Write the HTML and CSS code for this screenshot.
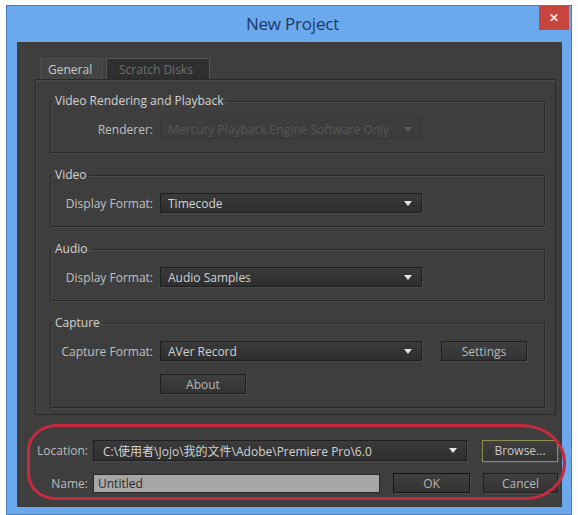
FILE: index.html
```html
<!DOCTYPE html>
<html>
<head>
  <meta charset="utf-8">
  <link rel="stylesheet" href="styles.css">
</head>
<body>
  <div class="window">
    <div class="titlebar">
      <span></span>
      <span class="title">New Project</span>
      <span class="close">&#x2715;</span>
    </div>

    <div class="content">
      <div class="tabs">
        <div class="tab active">General</div>
        <div class="tab">Scratch Disks</div>
      </div>

      <div class="panel">
        <fieldset class="group">
          <legend>Video Rendering and Playback</legend>
          <div class="row">
            <label>Renderer:</label>
            <div class="select disabled"><span>Mercury Playback Engine Software Only</span><i class="arrow"></i></div>
          </div>
        </fieldset>

        <fieldset class="group">
          <legend>Video</legend>
          <div class="row">
            <label>Display Format:</label>
            <div class="select"><span>Timecode</span><i class="arrow"></i></div>
          </div>
        </fieldset>

        <fieldset class="group">
          <legend>Audio</legend>
          <div class="row">
            <label>Display Format:</label>
            <div class="select"><span>Audio Samples</span><i class="arrow"></i></div>
          </div>
        </fieldset>

        <fieldset class="group">
          <legend>Capture</legend>
          <div class="row">
            <label>Capture Format:</label>
            <div class="select"><span>AVer Record</span><i class="arrow"></i></div>
            <button class="btn settings">Settings</button>
          </div>
          <div class="row sub">
            <span></span>
            <button class="btn about">About</button>
          </div>
        </fieldset>
      </div>

      <div class="footer">
        <div class="frow">
          <label>Location:</label>
          <div class="select location"><span>C:\使用者\Jojo\我的文件\Adobe\Premiere Pro\6.0</span><i class="arrow"></i></div>
          <button class="btn browse">Browse...</button>
        </div>
        <div class="frow">
          <label>Name:</label>
          <div class="name-input">Untitled</div>
          <button class="btn ok">OK</button>
          <button class="btn cancel">Cancel</button>
        </div>
        <div class="mark"></div>
      </div>
    </div>
  </div>
</body>
</html>
```

FILE: styles.css
```css
body {
  margin: 0;
  background: #fdfdfd;
  font-family: 'Open Sans', 'Noto Sans', 'Noto Sans CJK TC', sans-serif;
  font-size: 12px;
}

.window {
  box-sizing: border-box;
  width: 566px;
  height: 510px;
  margin: 5px 0 0 6px;
  background: #6ba8ec;
  border: 1px solid #4a7cbc;
  padding: 0 9px 6px 10px;
}

/* title bar */
.titlebar {
  height: 36px;
  display: grid;
  grid-template-columns: 1fr auto 1fr;
  align-items: start;
}

.title {
  margin: 6px 0 0 6px;
  font-size: 17px;
  color: #1c3a68;
  letter-spacing: -0.2px;
}

.close {
  justify-self: end;
  width: 30px;
  height: 24px;
  margin: 0 -7px 0 0;
  background: #c8443e;
  color: #f4dcdc;
  font-size: 12px;
  font-weight: bold;
  text-align: center;
  line-height: 24px;
}

/* dark body of the dialog */
.content {
  background: #3e3e3e;
  padding: 16px 6px 14px 18px;
  color: #c4c4c4;
}

.tabs {
  display: flex;
  height: 21px;
  padding-left: 5px;
}

.tab {
  box-sizing: border-box;
  height: 21px;
  padding: 2px 8px 0 7px;
  color: #c8c8c8;
}

.tab.active {
  width: 63px;
  background: #444;
  border: 1px solid #4e4e4e;
  border-bottom: none;
}

.tab + .tab {
  width: 104px;
  margin-left: 3px;
  padding-left: 12px;
  background: #2f2f2f;
  border: 1px solid #565656;
  border-bottom: none;
  color: #6e6e6e;
}

.panel {
  height: 336px;
  box-sizing: border-box;
  border: 1px solid #2a2a2a;
  box-shadow: inset 1px 1px 0 #4a4a4a;
  padding: 13px 13px 4px 14px;
}

/* group boxes */
.group {
  margin: 0 0 14px 0;
  padding: 10px 10px 13px 0;
  border: 1px solid #2a2a2a;
  box-shadow: 1px 1px 0 #4b4b4b, inset 1px 1px 0 #4b4b4b;
}

.group:last-child {
  margin-bottom: 0;
}

.group legend {
  height: 16px;
  line-height: 16px;
  padding: 0 3px;
  margin-left: 1px;
  color: #d2d2d2;
}

.row {
  display: grid;
  grid-template-columns: 102px 262px 105px;
  column-gap: 7px;
  align-items: center;
  height: 20px;
}

.row label {
  text-align: right;
  white-space: nowrap;
  color: #c0c0c0;
}

.row.sub {
  margin-top: 13px;
}

/* dropdowns */
.select {
  box-sizing: border-box;
  height: 20px;
  display: flex;
  align-items: center;
  padding: 0 9px 0 7px;
  background: linear-gradient(#3a3a3a, #2e2e2e);
  border: 1px solid #1e1e1e;
  box-shadow: 1px 1px 0 #4a4a4a;
  color: #d2d2d2;
  white-space: nowrap;
  overflow: hidden;
}

.select span {
  flex: 1;
  overflow: hidden;
}

.select.disabled {
  background: #3d3d3d;
  border-color: #373737;
  color: #565656;
  box-shadow: none;
}

.arrow {
  width: 0;
  height: 0;
  border-left: 4px solid transparent;
  border-right: 4px solid transparent;
  border-top: 5px solid #e4e4e4;
}

.select.disabled .arrow {
  border-top-color: #5a5a5a;
}

/* buttons */
.btn {
  box-sizing: border-box;
  height: 20px;
  padding: 0;
  font-family: inherit;
  font-size: 12px;
  color: #b8b8b8;
  background: linear-gradient(#3f3f3f, #333);
  border: 1px solid #1f1f1f;
  box-shadow: 1px 1px 0 #4c4c4c;
}

.settings {
  margin-left: 12px;
  width: 86px;
}

.about {
  width: 86px;
}

/* location / name area */
.footer {
  position: relative;
  margin: 0 -6px 0 -4px;
  padding-top: 25px;
}

.frow {
  display: flex;
  align-items: center;
  height: 21px;
}

.frow + .frow {
  margin-top: 12px;
  height: 20px;
}

.frow label {
  width: 57px;
  margin-right: 5px;
  text-align: right;
  white-space: nowrap;
  color: #bcbcbc;
}

.location {
  width: 374px;
  height: 21px;
  padding-left: 9px;
}

.browse {
  width: 76px;
  height: 22px;
  margin-left: 15px;
  border-color: #8e8c52;
  color: #c8c8c8;
}

.name-input {
  box-sizing: border-box;
  width: 287px;
  height: 19px;
  padding: 0 4px;
  line-height: 18px;
  background: #a6a6a6;
  border: 1px solid #2a2a2a;
  color: #2a2a2a;
}

.ok {
  width: 77px;
  margin-left: 13px;
  border-color: #151515;
}

.cancel {
  width: 75px;
  margin-left: 13px;
}

/* red outline drawn over the location and name rows */
.mark {
  position: absolute;
  left: -4px;
  top: 9px;
  width: 539px;
  height: 76px;
  box-sizing: border-box;
  border: 3px solid #c52a3e;
  border-radius: 30px 44px 40px 28px / 26px 38px 36px 26px;
  pointer-events: none;
}
```
